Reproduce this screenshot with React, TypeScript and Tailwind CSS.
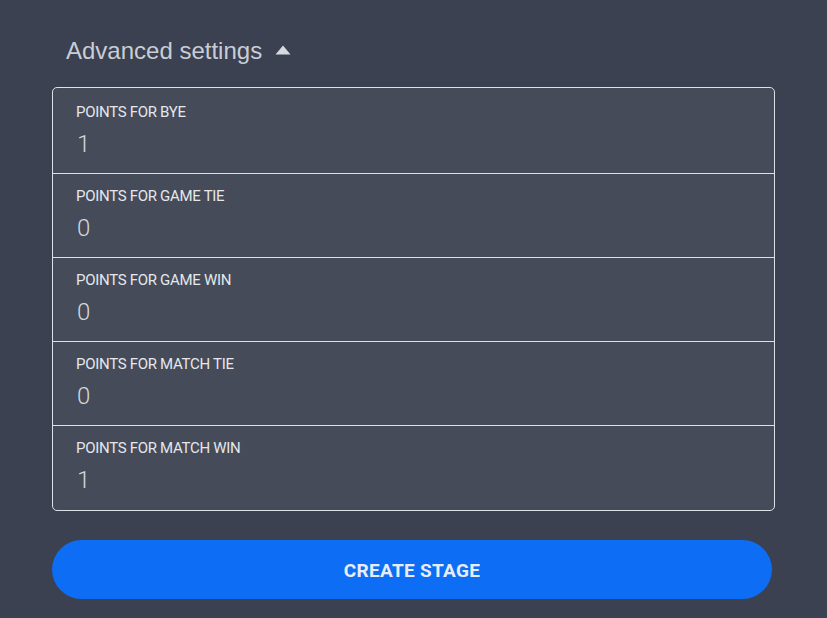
import React from "react";

const fields = [
  { label: "POINTS FOR BYE", value: "1" },
  { label: "POINTS FOR GAME TIE", value: "0" },
  { label: "POINTS FOR GAME WIN", value: "0" },
  { label: "POINTS FOR MATCH TIE", value: "0" },
  { label: "POINTS FOR MATCH WIN", value: "1" },
];

function Field({ label, value, last }: { label: string; value: string; last?: boolean }) {
  return (
    <div
      className={
        "flex h-[84px] flex-col px-[23px] pt-[13px] " + (last ? "" : "border-b border-[#dde0e6]")
      }
    >
      <span className="text-[15px] leading-[18px] tracking-[-0.3px] text-[#e4e7ec] [font-family:Roboto,sans-serif]">
        {label}
      </span>
      <span className="mt-[9px] pl-px text-[24px] font-light leading-[28px] text-[#d3d7de] [font-family:Roboto,sans-serif]">
        {value}
      </span>
    </div>
  );
}

export default function App() {
  return (
    <div className="min-h-[618px] bg-[#3b4150] px-[52px]">
      <div className="w-[723px]">
        <button className="flex h-[87px] items-center gap-[13px] pt-[15px] pl-[14px] text-[24px] text-[#c9cdd5] [font-family:'Liberation_Sans',Arial,sans-serif]">
          Advanced settings
          <svg width="16" height="10" viewBox="0 0 16 10" className="mt-[-2px]">
            <path d="M8 0.5 L15.5 9.5 H0.5 Z" fill="#d6d9df" strokeLinejoin="round" />
          </svg>
        </button>
        <div className="overflow-hidden rounded-[5px] border border-[#dde0e6] bg-[#454b58] pt-[2px]">
          {fields.map((f, i) => (
            <Field key={f.label} label={f.label} value={f.value} last={i === fields.length - 1} />
          ))}
        </div>
        <button className="mt-[29px] flex h-[59px] w-[720px] items-center justify-center rounded-full bg-[#0d6ef5] pt-[3px] text-[19px] font-bold tracking-[0.3px] text-[#e8edf5] [font-family:Roboto,sans-serif]">
          CREATE STAGE
        </button>
      </div>
    </div>
  );
}
